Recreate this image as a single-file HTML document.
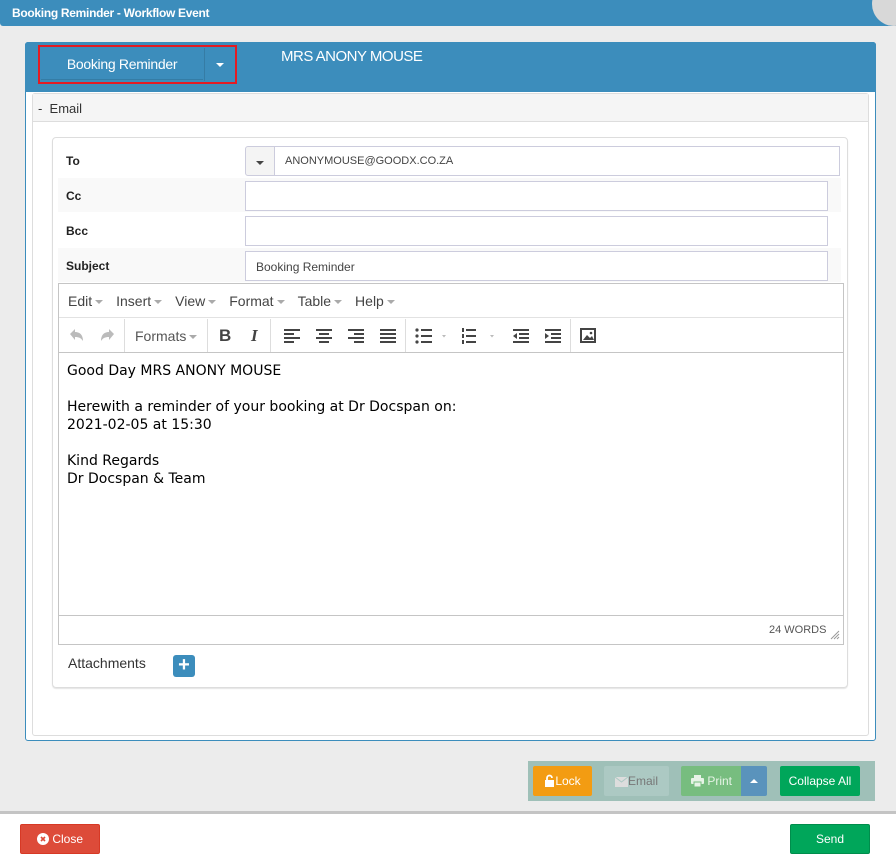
<!DOCTYPE html>
<html><head><meta charset="utf-8"><style>
*{box-sizing:border-box;margin:0;padding:0}
body{width:896px;height:864px;background:#ececec;font-family:"Liberation Sans",sans-serif;position:relative;overflow:hidden}
.a{position:absolute}
.lbl{position:absolute;left:58px;width:187px;font-size:12px;font-weight:bold;color:#222;padding-left:8px}
.inp{position:absolute;background:#fff;border:1px solid #ccd;font-size:11px;color:#444}
.mi{display:inline-block;margin-right:13px;font-size:14px;color:#444}
.car{display:inline-block;width:0;height:0;border-left:4px solid transparent;border-right:4px solid transparent;border-top:4px solid #aaa;vertical-align:middle;margin-left:3px}
.sep{position:absolute;top:319px;width:1px;height:33px;background:#ddd}
.btn{position:absolute;color:#fff;font-size:12px;text-align:center;border-radius:2px}
.btn svg{vertical-align:-2px}
</style></head><body>
<div class="a" style="left:0;top:0;width:896px;height:26px;background:#3c8dbc;border-radius:0 0 0 3px"></div>
<div class="a" style="left:12px;top:6px;color:#fff;font-size:12px;font-weight:bold;letter-spacing:-0.3px">Booking Reminder - Workflow Event</div>
<div class="a" style="left:872px;top:-18px;width:44px;height:44px;border-radius:50%;background:#d8d8d8"></div>

<div class="a" style="left:25px;top:42px;width:851px;height:699px;background:#fff;border:1px solid #3c8dbc;border-radius:3px"></div>
<div class="a" style="left:25px;top:42px;width:851px;height:50px;background:#3c8dbc;border-radius:3px 3px 0 0"></div>
<div class="a" style="left:38px;top:45px;width:199px;height:39px;border:2px solid #e31b23"></div>
<div class="a" style="left:41px;top:48px;width:162px;height:32px;border-bottom:1px solid #357ca5;color:#fff;font-size:14px;text-align:center;line-height:32px;letter-spacing:-0.3px">Booking Reminder</div>
<div class="a" style="left:204px;top:48px;width:1px;height:33px;background:#357ca5"></div>
<div class="a" style="left:216px;top:63px;width:0;height:0;border-left:4px solid transparent;border-right:4px solid transparent;border-top:4px solid #fff"></div>
<div class="a" style="left:281px;top:48px;color:#fff;font-size:15px;letter-spacing:-0.5px">MRS ANONY MOUSE</div>

<div class="a" style="left:32px;top:93px;width:837px;height:643px;border:1px solid #ddd;border-radius:3px"></div>
<div class="a" style="left:33px;top:94px;width:835px;height:28px;background:#f5f5f5;border-bottom:1px solid #ddd;font-size:13px;color:#333;padding:7px 0 0 5px">-&nbsp; Email</div>

<div class="a" style="left:52px;top:137px;width:796px;height:551px;border:1px solid #ddd;border-radius:4px;box-shadow:0 1px 1px #e4e4e4"></div>
<div class="a" style="left:58px;top:178px;width:783px;height:34px;background:#f9f9f9"></div>
<div class="a" style="left:58px;top:248px;width:783px;height:34px;background:#f9f9f9"></div>
<div class="lbl" style="top:154px">To</div>
<div class="lbl" style="top:189px">Cc</div>
<div class="lbl" style="top:224px">Bcc</div>
<div class="lbl" style="top:259px">Subject</div>
<div class="inp" style="left:245px;top:146px;width:30px;height:30px;background:#f4f4f4;border-radius:3px 0 0 3px"><div class="a" style="left:10px;top:14px;border-left:4px solid transparent;border-right:4px solid transparent;border-top:4px solid #444"></div></div>
<div class="inp" style="left:274px;top:146px;width:566px;height:30px;padding:8px 10px">ANONYMOUSE@GOODX.CO.ZA</div>
<div class="inp" style="left:245px;top:181px;width:583px;height:30px"></div>
<div class="inp" style="left:245px;top:216px;width:583px;height:30px"></div>
<div class="inp" style="left:245px;top:251px;width:583px;height:30px;padding:8px 10px;font-size:12px">Booking Reminder</div>

<div class="a" style="left:58px;top:283px;width:786px;height:362px;border:1px solid #c5c5c5;background:#fff"></div>
<div class="a" style="left:59px;top:317px;width:784px;height:1px;background:#e2e2e2"></div>
<div class="a" style="left:59px;top:352px;width:784px;height:1px;background:#c5c5c5"></div>
<div class="a" style="left:59px;top:615px;width:784px;height:1px;background:#c5c5c5"></div>
<div class="a" style="left:68px;top:293px;white-space:nowrap"><span class="mi">Edit<i class="car"></i></span><span class="mi">Insert<i class="car"></i></span><span class="mi">View<i class="car"></i></span><span class="mi">Format<i class="car"></i></span><span class="mi">Table<i class="car"></i></span><span class="mi">Help<i class="car"></i></span></div>
<svg class="a" style="left:67px;top:327px" width="50" height="18"><path d="M3 7l5-5v3c5 0 8 3 8 9c-2-3-4-4-8-4v3z" fill="#bbb"/><path d="M47 7l-5-5v3c-5 0-8 3-8 9c2-3 4-4 8-4v3z" fill="#bbb"/></svg>
<div class="sep" style="left:124px"></div>
<div class="a" style="left:135px;top:328px;font-size:14px;color:#555">Formats<i class="car"></i></div>
<div class="sep" style="left:207px"></div>
<div class="a" style="left:219px;top:326px;font-size:17px;font-weight:bold;color:#444">B</div>
<div class="a" style="left:251px;top:326px;font-size:17px;font-style:italic;font-family:'Liberation Serif',serif;font-weight:bold;color:#444">I</div>
<div class="sep" style="left:270px"></div>
<svg class="a" style="left:280px;top:326px" width="300" height="20">
<g fill="#444">
<rect x="4" y="3" width="16" height="2"/><rect x="4" y="7" width="10" height="2"/><rect x="4" y="11" width="16" height="2"/><rect x="4" y="15" width="10" height="2"/>
<rect x="36" y="3" width="16" height="2"/><rect x="39" y="7" width="10" height="2"/><rect x="36" y="11" width="16" height="2"/><rect x="39" y="15" width="10" height="2"/>
<rect x="68" y="3" width="16" height="2"/><rect x="74" y="7" width="10" height="2"/><rect x="68" y="11" width="16" height="2"/><rect x="74" y="15" width="10" height="2"/>
<rect x="100" y="3" width="16" height="2"/><rect x="100" y="7" width="16" height="2"/><rect x="100" y="11" width="16" height="2"/><rect x="100" y="15" width="16" height="2"/>
<circle cx="137" cy="4" r="1.6"/><circle cx="137" cy="10" r="1.6"/><circle cx="137" cy="16" r="1.6"/>
<rect x="141" y="3" width="11" height="2"/><rect x="141" y="9" width="11" height="2"/><rect x="141" y="15" width="11" height="2"/>
<rect x="186" y="3" width="10" height="2"/><rect x="186" y="9" width="10" height="2"/><rect x="186" y="15" width="10" height="2"/>
<rect x="182" y="2" width="2" height="4"/><rect x="182" y="8" width="2" height="4"/><rect x="182" y="14" width="2" height="4"/>
<rect x="233" y="3" width="16" height="2"/><rect x="239" y="7" width="10" height="2"/><rect x="239" y="11" width="10" height="2"/><rect x="233" y="15" width="16" height="2"/><path d="M237 7v6l-4-3z"/>
<rect x="265" y="3" width="16" height="2"/><rect x="271" y="7" width="10" height="2"/><rect x="271" y="11" width="10" height="2"/><rect x="265" y="15" width="16" height="2"/><path d="M265 7v6l4-3z"/>
</g>
<path d="M162 9l4 0-2 2.5z M210 9l4 0-2 2.5z" fill="#bbb"/>
</svg>
<div class="sep" style="left:405px"></div>
<div class="sep" style="left:570px"></div>
<svg class="a" style="left:580px;top:328px" width="16" height="16"><rect x="1" y="1" width="14" height="13" fill="none" stroke="#444" stroke-width="2"/><path d="M3 12l4-5 3 3 2-2 2 4z" fill="#444"/><circle cx="11" cy="5" r="1.3" fill="#444"/></svg>

<div class="a" style="left:67px;top:362px;font-family:'DejaVu Sans',sans-serif;font-size:14px;line-height:18px;color:#000">Good Day MRS ANONY MOUSE<br><br>Herewith a reminder of your booking at Dr Docspan on:<br>2021-02-05 at 15:30<br><br>Kind Regards<br>Dr Docspan &amp; Team</div>
<div class="a" style="left:769px;top:624px;font-size:11px;color:#555">24 WORDS</div>
<svg class="a" style="left:830px;top:630px" width="10" height="10"><path d="M9 1L1 9M9 4L4 9M9 7L7 9" stroke="#999" stroke-width="1"/></svg>

<div class="a" style="left:68px;top:655px;font-size:14px;color:#333">Attachments</div>
<div class="a" style="left:173px;top:655px;width:22px;height:22px;background:#3c8dbc;border-radius:3px;color:#fff;font-size:20px;font-weight:bold;text-align:center;line-height:21px">+</div>

<div class="a" style="left:528px;top:761px;width:347px;height:40px;background:#9fc0b8"></div>
<div class="btn" style="left:533px;top:766px;width:59px;height:30px;background:#f39c12;line-height:30px"><svg width="11" height="13"><path d="M1 6h9v7H1z" fill="#fff"/><path d="M3 6V4a2.5 2.5 0 0 1 5 0" stroke="#fff" stroke-width="1.8" fill="none"/></svg>Lock</div>
<div class="btn" style="left:604px;top:766px;width:65px;height:30px;background:#acc9c3;color:#777;line-height:30px"><svg width="13" height="10"><rect x="0" y="0" width="13" height="10" fill="#ddd"/><path d="M0 0l6.5 5 6.5-5" stroke="#acc9c3" fill="none"/></svg>Email</div>
<div class="btn" style="left:681px;top:766px;width:61px;height:30px;background:#77bd7f;color:#e6f3e6;line-height:30px;border-radius:2px 0 0 2px"><svg width="13" height="12"><rect x="3" y="0" width="7" height="3" fill="#e6f3e6"/><rect x="0" y="3" width="13" height="6" rx="1" fill="#e6f3e6"/><rect x="3" y="7" width="7" height="5" fill="#e6f3e6" stroke="#77bd7f"/></svg> Print</div>
<div class="btn" style="left:741px;top:766px;width:26px;height:30px;background:#5a93bc;border-radius:0 2px 2px 0"><div class="a" style="left:9px;top:13px;border-left:4px solid transparent;border-right:4px solid transparent;border-bottom:4px solid #fff"></div></div>
<div class="btn" style="left:780px;top:766px;width:80px;height:30px;background:#00a65a;line-height:30px">Collapse All</div>

<div class="a" style="left:0;top:811px;width:896px;height:3px;background:#c4c4c4"></div>
<div class="a" style="left:0;top:814px;width:896px;height:50px;background:#fff"></div>
<div class="btn" style="left:20px;top:824px;width:80px;height:30px;background:#dd4b39;line-height:28px;border:1px solid #d73925"><svg width="12" height="12"><circle cx="6" cy="6" r="6" fill="#fff"/><path d="M4 4l4 4M8 4l-4 4" stroke="#dd4b39" stroke-width="1.6"/></svg> Close</div>
<div class="btn" style="left:790px;top:824px;width:80px;height:30px;background:#00a65a;line-height:28px;border:1px solid #008d4c">Send</div>
</body></html>
